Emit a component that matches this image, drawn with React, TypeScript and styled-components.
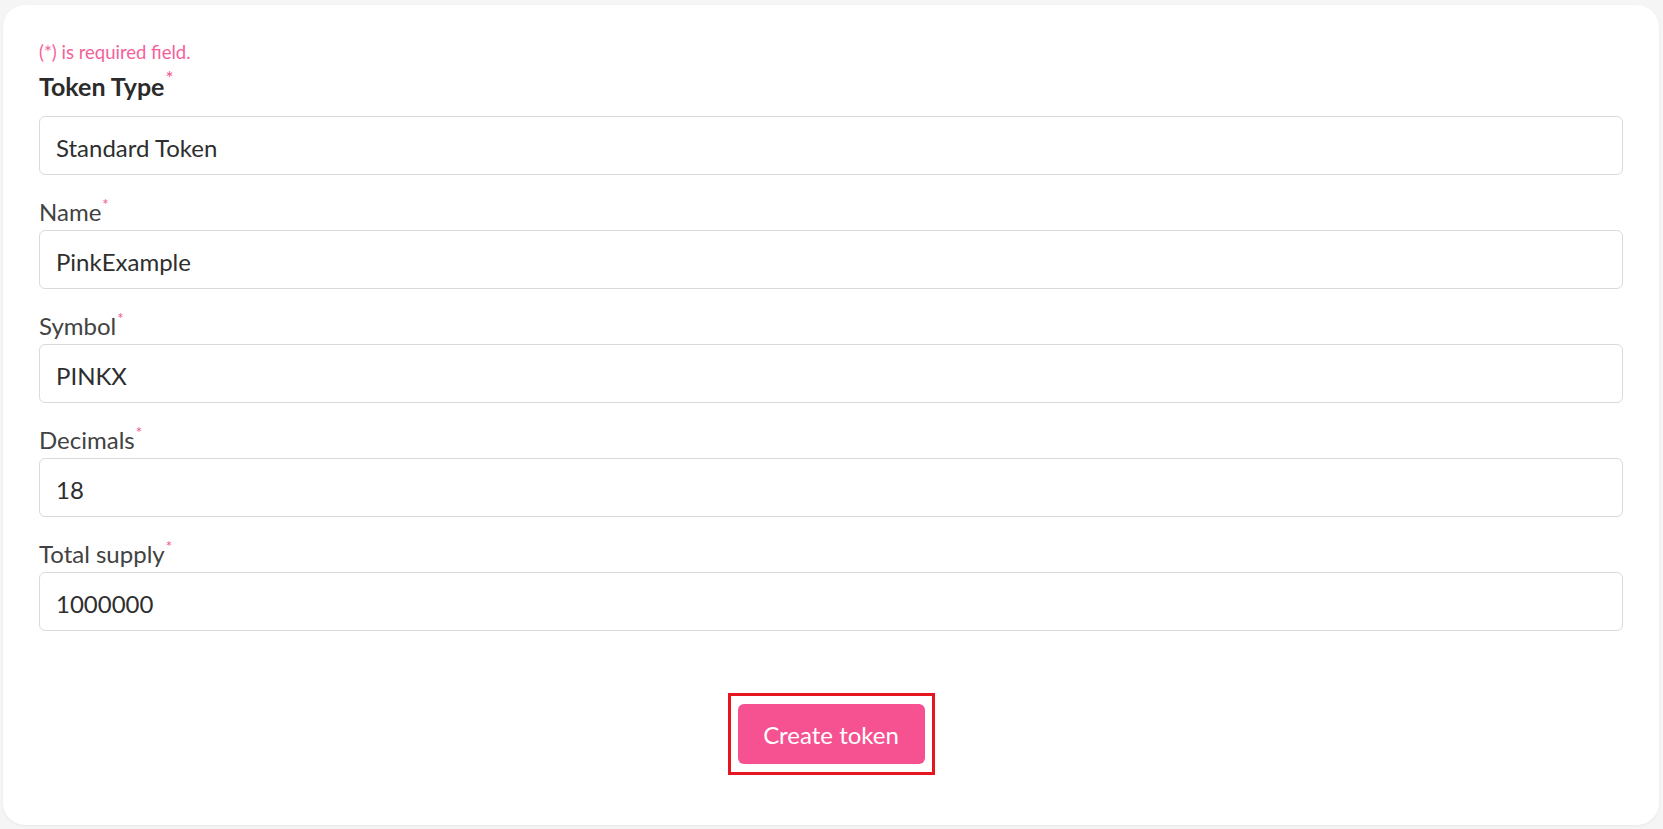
import React from 'react';
import styled, { createGlobalStyle } from 'styled-components';

const GlobalStyle = createGlobalStyle`
  html, body {
    margin: 0;
    padding: 0;
    background-color: #f5f5f5;
    font-family: Lato, 'Open Sans', 'Liberation Sans', sans-serif;
  }
  * {
    box-sizing: border-box;
  }
`;

const Page = styled.div`
  padding: 5px 4px 5px 3px;
  min-height: 829px;
`;

const Card = styled.form`
  background-color: #fff;
  border-radius: 22px;
  box-shadow: 0 1px 3px rgba(0, 0, 0, 0.06);
  padding: 36px 36px 50px;
  display: flex;
  flex-direction: column;
`;

const RequiredNote = styled.div`
  color: #f4619a;
  font-size: 18.5px;
  line-height: 22px;
  margin-bottom: 8px;
`;

const Field = styled.div`
  display: flex;
  flex-direction: column;
  margin-bottom: 22px;
`;

const Label = styled.label<{ $strong?: boolean }>`
  color: ${(p) => (p.$strong ? '#2b2b2b' : '#424242')};
  font-size: ${(p) => (p.$strong ? '25px' : '24px')};
  font-weight: ${(p) => (p.$strong ? 700 : 400)};
  line-height: 30px;
  margin-bottom: ${(p) => (p.$strong ? '15px' : '3px')};
`;

const Star = styled.sup<{ $strong?: boolean }>`
  color: #f25590;
  font-size: ${(p) => (p.$strong ? '19px' : '15px')};
  font-weight: 400;
  line-height: 0;
  vertical-align: 11px;
  margin-left: 1px;
`;

const Input = styled.input`
  width: 100%;
  height: 59px;
  padding: 3px 16px 0;
  border: 1px solid #dadada;
  border-radius: 6px;
  background-color: #fff;
  color: #2e2e2e;
  font-family: inherit;
  font-size: 24px;
  outline: none;
`;

const Actions = styled.div`
  display: flex;
  justify-content: center;
  margin-top: 40px;
`;

const Highlight = styled.div`
  border: 3px solid #e51620;
  padding: 8px 7px;
`;

const SubmitButton = styled.button`
  width: 187px;
  height: 60px;
  border: none;
  border-radius: 6px;
  background-color: #f65191;
  color: #fff;
  font-family: inherit;
  font-size: 24px;
  cursor: pointer;
`;

const fields = [
  { label: 'Name', value: 'PinkExample' },
  { label: 'Symbol', value: 'PINKX' },
  { label: 'Decimals', value: '18' },
  { label: 'Total supply', value: '1000000' },
];

const App: React.FC = () => {
  return (
    <Page>
      <GlobalStyle />
      <Card onSubmit={(e) => e.preventDefault()}>
        <RequiredNote>(*) is required field.</RequiredNote>
        <Field>
          <Label $strong>
            Token Type<Star $strong>*</Star>
          </Label>
          <Input readOnly defaultValue="Standard Token" />
        </Field>
        {fields.map((f) => (
          <Field key={f.label}>
            <Label>
              {f.label}
              <Star>*</Star>
            </Label>
            <Input defaultValue={f.value} />
          </Field>
        ))}
        <Actions>
          <Highlight>
            <SubmitButton type="submit">Create token</SubmitButton>
          </Highlight>
        </Actions>
      </Card>
    </Page>
  );
};

export default App;
